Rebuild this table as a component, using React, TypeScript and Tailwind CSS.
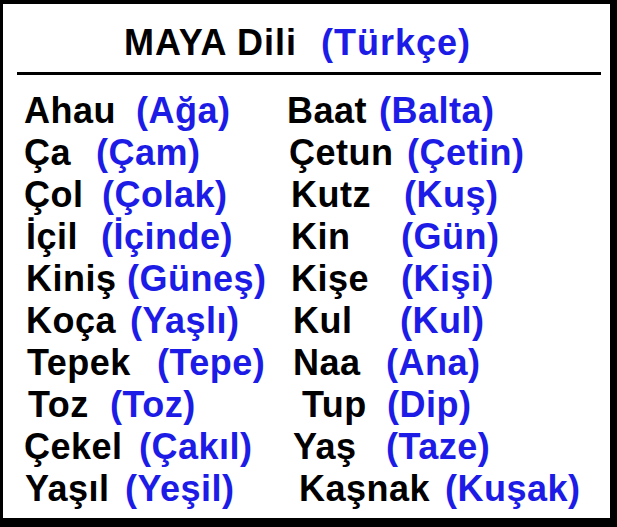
import React from 'react'

type Pair = {
  word: string
  meaning: string
  pad: string
  width: string
}

const left: Pair[] = [
  { word: 'Ahau', meaning: '(Ağa)', pad: 'pl-[21px]', width: 'w-[112px]' },
  { word: 'Ça', meaning: '(Çam)', pad: 'pl-[21px]', width: 'w-[72px]' },
  { word: 'Çol', meaning: '(Çolak)', pad: 'pl-[21px]', width: 'w-[78px]' },
  { word: 'İçil', meaning: '(İçinde)', pad: 'pl-[23px]', width: 'w-[75px]' },
  { word: 'Kiniş', meaning: '(Güneş)', pad: 'pl-[23px]', width: 'w-[101px]' },
  { word: 'Koça', meaning: '(Yaşlı)', pad: 'pl-[23px]', width: 'w-[104px]' },
  { word: 'Tepek', meaning: '(Tepe)', pad: 'pl-[24px]', width: 'w-[130px]' },
  { word: 'Toz', meaning: '(Toz)', pad: 'pl-[25px]', width: 'w-[82px]' },
  { word: 'Çekel', meaning: '(Çakıl)', pad: 'pl-[21px]', width: 'w-[115px]' },
  { word: 'Yaşıl', meaning: '(Yeşil)', pad: 'pl-[22px]', width: 'w-[100px]' },
]

const right: Pair[] = [
  { word: 'Baat', meaning: '(Balta)', pad: 'pl-[4px]', width: 'w-[92px]' },
  { word: 'Çetun', meaning: '(Çetin)', pad: 'pl-[6px]', width: 'w-[118px]' },
  { word: 'Kutz', meaning: '(Kuş)', pad: 'pl-[8px]', width: 'w-[113px]' },
  { word: 'Kin', meaning: '(Gün)', pad: 'pl-[8px]', width: 'w-[110px]' },
  { word: 'Kişe', meaning: '(Kişi)', pad: 'pl-[8px]', width: 'w-[110px]' },
  { word: 'Kul', meaning: '(Kul)', pad: 'pl-[10px]', width: 'w-[107px]' },
  { word: 'Naa', meaning: '(Ana)', pad: 'pl-[10px]', width: 'w-[93px]' },
  { word: 'Tup', meaning: '(Dip)', pad: 'pl-[19px]', width: 'w-[85px]' },
  { word: 'Yaş', meaning: '(Taze)', pad: 'pl-[10px]', width: 'w-[93px]' },
  { word: 'Kaşnak', meaning: '(Kuşak)', pad: 'pl-[16px]', width: 'w-[146px]' },
]

const Entry = ({ item }: { item: Pair }) => (
  <div className={`flex whitespace-nowrap ${item.pad}`}>
    <span className={`${item.width} shrink-0 text-black`}>{item.word}</span>
    <span className="text-[#1c1ce6]">{item.meaning}</span>
  </div>
)

export default function App() {
  return (
    <div className="w-[617px] h-[527px] bg-white border-black border-t-[4px] border-r-[7px] border-b-[9px] border-l-[3px] font-['Liberation_Sans',Arial,sans-serif] font-bold">
      <header className="pt-[21px] pl-[121px] flex text-[36px] leading-none tracking-[1px] whitespace-nowrap">
        <span className="w-[197px] shrink-0 text-black">MAYA Dili</span>
        <span className="text-[#1c1ce6]">(Türkçe)</span>
      </header>

      <div className="ml-[14px] mt-[11px] w-[584px] h-[3px] bg-black" />

      <div className="mt-[15px] grid grid-cols-[280px_1fr] text-[36px] leading-[42px] tracking-[0.5px]">
        {left.map((item, i) => (
          <React.Fragment key={item.word}>
            <Entry item={item} />
            <Entry item={right[i]} />
          </React.Fragment>
        ))}
      </div>
    </div>
  )
}
